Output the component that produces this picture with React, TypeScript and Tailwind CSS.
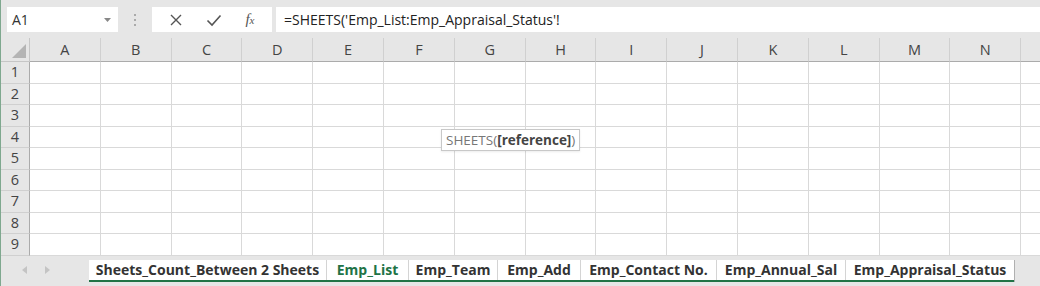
import { Fragment } from "react";

const columns = ["A", "B", "C", "D", "E", "F", "G", "H", "I", "J", "K", "L", "M", "N"];
const rows = [1, 2, 3, 4, 5, 6, 7, 8, 9];

const tabs = [
    { name: "Sheets_Count_Between 2 Sheets", width: "w-[237px]" },
    { name: "Emp_List", width: "w-[82px]", active: true },
    { name: "Emp_Team", width: "w-[89px]" },
    { name: "Emp_Add", width: "w-[83px]" },
    { name: "Emp_Contact No.", width: "w-[136px]" },
    { name: "Emp_Annual_Sal", width: "w-[129px]" },
    { name: "Emp_Appraisal_Status", width: "w-[169px]" },
];

function FormulaBar() {
    return (
        <div className="flex h-[38px] items-center bg-[#e6e6e6] pl-[6px] pt-[1px]">
            <div className="flex h-[25px] w-[111px] items-center justify-between bg-white pl-[5px] pr-[7px] text-[14px] text-[#333]">
                <span>A1</span>
                <svg width="7" height="4" viewBox="0 0 7 4">
                    <path d="M0 0 L7 0 L3.5 4 Z" fill="#888" />
                </svg>
            </div>
            <div className="flex w-[34px] flex-col items-center justify-center gap-[3px]">
                <span className="h-[2px] w-[2px] bg-[#aaa]" />
                <span className="h-[2px] w-[2px] bg-[#aaa]" />
                <span className="h-[2px] w-[2px] bg-[#aaa]" />
            </div>
            <div className="flex h-[25px] w-[120px] items-center justify-around bg-white px-[6px]">
                <svg width="14" height="14" viewBox="0 0 14 14">
                    <path d="M2 2 L12 12 M12 2 L2 12" stroke="#555" strokeWidth="1.4" />
                </svg>
                <svg width="16" height="14" viewBox="0 0 16 14">
                    <path d="M1.5 7.5 L6 12 L14.5 2.5" stroke="#555" strokeWidth="1.6" fill="none" />
                </svg>
                <span className="font-['Liberation_Serif',serif] text-[15px] italic text-[#555]">
                    f<span className="text-[11px]">x</span>
                </span>
            </div>
            <div className="ml-[4px] flex h-[25px] flex-1 items-center bg-white pl-[8px] text-[14px] text-[#222]">
                =SHEETS('Emp_List:Emp_Appraisal_Status'!
            </div>
        </div>
    );
}

function Grid() {
    return (
        <div className="relative grid grid-cols-[29px_repeat(14,70.8px)_1fr] grid-rows-[24px_repeat(9,21.5px)] bg-white">
            <div className="flex items-end justify-end border-r border-b border-[#c6c6c6] bg-[#e6e6e6] pr-[3px] pb-[3px]">
                <svg width="14" height="14" viewBox="0 0 14 14">
                    <path d="M14 0 L14 14 L0 14 Z" fill="#b4b4b4" />
                </svg>
            </div>
            {columns.map((col) => (
                <div
                    key={col}
                    className="flex items-center justify-center border-r border-b border-[#d0d0d0] border-b-[#ababab] bg-[#e6e6e6] text-[14.5px] text-[#444]"
                >
                    {col}
                </div>
            ))}
            <div className="border-b border-[#ababab] bg-[#e6e6e6]" />
            {rows.map((row) => (
                <Fragment key={row}>
                    <div className="flex items-center justify-center border-r border-b border-[#d0d0d0] border-r-[#ababab] bg-[#e6e6e6] text-[14.5px] text-[#444]">
                        {row}
                    </div>
                    {columns.map((col) => (
                        <div key={col} className="border-r border-b border-[#d9d9d9]" />
                    ))}
                    <div className="border-b border-[#d9d9d9]" />
                </Fragment>
            ))}
            <div className="absolute top-[91px] left-[440px] flex h-[22px] items-center border border-[#c8c8c8] bg-white px-[4px] text-[13.5px] text-[#777] shadow-[0_1px_2px_rgba(0,0,0,0.08)]">
                SHEETS(<span className="font-bold text-[#444]">[reference]</span>)
            </div>
        </div>
    );
}

function SheetTabs() {
    return (
        <div className="flex h-[30px] items-start bg-[#e6e6e6] pt-[4px]">
            <div className="flex w-[88px] items-center gap-[18px] pl-[21px] pt-[6px]">
                <svg width="5" height="8" viewBox="0 0 5 8">
                    <path d="M5 0 L0 4 L5 8 Z" fill="#c4c4c4" />
                </svg>
                <svg width="5" height="8" viewBox="0 0 5 8">
                    <path d="M0 0 L5 4 L0 8 Z" fill="#c4c4c4" />
                </svg>
            </div>
            <div className="flex h-[22px] border-b-2 border-[#217346] bg-white">
                {tabs.map((tab, i) => (
                    <div
                        key={tab.name}
                        className={`flex items-center justify-center text-[14px] font-bold ${tab.width} ${
                            i > 0 ? "border-l border-[#d4d4d4]" : ""
                        } ${tab.active ? "text-[#217346]" : "text-[#333]"}`}
                    >
                        {tab.name}
                    </div>
                ))}
            </div>
            <div className="h-[22px] border-l border-[#b0b0b0]" />
        </div>
    );
}

export default function App() {
    return (
        <div className="h-[286px] w-[1040px] overflow-hidden border-l border-[#7fa88f] bg-[#e6e6e6] font-['Open_Sans',sans-serif]">
            <FormulaBar />
            <Grid />
            <SheetTabs />
        </div>
    );
}
